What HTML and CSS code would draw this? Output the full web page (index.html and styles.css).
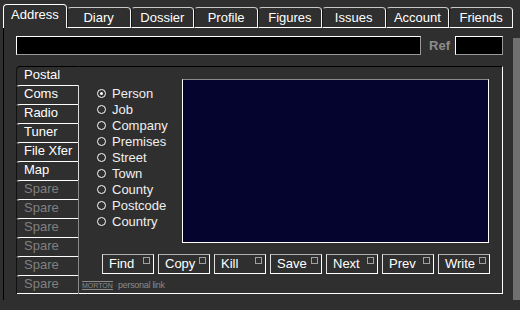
FILE: index.html
```html
<!DOCTYPE html>
<html lang="en">
<head>
  <meta charset="UTF-8" />
  <title>Personal Link</title>
  <link rel="stylesheet" href="styles.css">
</head>
<body>
  <div class="window">
    <div class="tabs">
      <div class="tab active">Address</div>
      <div class="tab">Diary</div>
      <div class="tab">Dossier</div>
      <div class="tab">Profile</div>
      <div class="tab">Figures</div>
      <div class="tab">Issues</div>
      <div class="tab">Account</div>
      <div class="tab">Friends</div>
    </div>
    <div class="frame">
      <div class="ref-row">
        <div class="field long"></div>
        <span class="ref-label">Ref</span>
        <div class="field ref"></div>
      </div>
      <div class="panel">
        <div class="side-tabs">
          <div class="side-tab active">Postal</div>
          <div class="side-tab">Coms</div>
          <div class="side-tab">Radio</div>
          <div class="side-tab">Tuner</div>
          <div class="side-tab">File Xfer</div>
          <div class="side-tab">Map</div>
          <div class="side-tab spare">Spare</div>
          <div class="side-tab spare">Spare</div>
          <div class="side-tab spare">Spare</div>
          <div class="side-tab spare">Spare</div>
          <div class="side-tab spare">Spare</div>
          <div class="side-tab spare">Spare</div>
        </div>
        <div class="content">
          <div class="search">
            <ul class="options">
              <li><span class="radio checked"></span>Person</li>
              <li><span class="radio"></span>Job</li>
              <li><span class="radio"></span>Company</li>
              <li><span class="radio"></span>Premises</li>
              <li><span class="radio"></span>Street</li>
              <li><span class="radio"></span>Town</li>
              <li><span class="radio"></span>County</li>
              <li><span class="radio"></span>Postcode</li>
              <li><span class="radio"></span>Country</li>
            </ul>
            <div class="results"></div>
          </div>
          <div class="actions">
            <button class="btn"><span>Find</span><span class="led"></span></button>
            <button class="btn"><span>Copy</span><span class="led"></span></button>
            <button class="btn"><span>Kill</span><span class="led"></span></button>
            <button class="btn"><span>Save</span><span class="led"></span></button>
            <button class="btn"><span>Next</span><span class="led"></span></button>
            <button class="btn"><span>Prev</span><span class="led"></span></button>
            <button class="btn"><span>Write</span><span class="led"></span></button>
          </div>
          <div class="brand"><span class="logo">MORTON</span> personal link</div>
        </div>
      </div>
    </div>
  </div>
</body>
</html>
```

FILE: styles.css
```css
* {
  box-sizing: border-box;
}
body {
  margin: 0;
  background: #2f2f2f;
  font-family: "Liberation Sans", Arial, sans-serif;
  font-size: 13px;
  color: #fff;
}
.window {
  padding: 3px 0 0 3px;
}
.tabs {
  display: flex;
  align-items: flex-end;
  width: 510px;
  height: 25px;
}
.tab {
  flex: 1;
  height: 21px;
  line-height: 20px;
  text-align: center;
  border-top: 1px solid #c8c8c8;
  border-left: 1px solid #151515;
  border-right: 1px solid #f2f2f2;
  border-bottom: 1px solid #fff;
  border-radius: 4px 4px 0 0;
}
.tab.active {
  height: 24px;
  padding-bottom: 3px;
  border-top-color: #fff;
  border-left-color: #fff;
  border-bottom: none;
}
.frame {
  width: 510px;
  height: 272px;
  padding: 8px 10px 0 12px;
  border-left: 1px solid #000;
  background: #2f2f2f;
  box-shadow: 7px 10px 0 #707070;
}
.ref-row {
  display: flex;
  align-items: center;
  height: 19px;
}
.field {
  height: 19px;
  background: #000;
  border: 1px solid;
  border-color: #fff #999 #999 #fff;
}
.field.long {
  flex: 1;
}
.field.ref {
  width: 48px;
}
.ref-label {
  margin: 0 5px 0 8px;
  font-weight: bold;
  color: #8c8c8c;
}
.panel {
  display: flex;
  margin-top: 11px;
  height: 228px;
}
.side-tabs {
  width: 63px;
  border-bottom: 1px solid #fff;
}
.side-tab {
  height: 19px;
  line-height: 16px;
  padding-left: 7px;
  border-top: 1px solid #fff;
  border-left: 1px solid #111;
  border-right: 1px solid #ddd;
  border-top-left-radius: 4px;
}
.side-tab.active {
  border-top-color: #000;
  border-right-color: transparent;
}
.side-tab.spare {
  color: #808080;
  border-right-color: #8a8a8a;
}
.content {
  flex: 1;
  border-top: 1px solid #000;
  border-right: 1px solid #fff;
  border-bottom: 1px solid #fff;
}
.search {
  display: flex;
  margin-top: 12px;
}
.options {
  list-style: none;
  margin: 0;
  padding: 6px 0 0 18px;
  width: 103px;
}
.options li {
  display: flex;
  align-items: center;
  gap: 6px;
  height: 16px;
  color: #f0f0f0;
}
.radio {
  width: 9px;
  height: 9px;
  border: 1px solid #fff;
  border-radius: 50%;
  display: flex;
  align-items: center;
  justify-content: center;
}
.radio.checked::after {
  content: "";
  width: 3px;
  height: 3px;
  background: #fff;
  border-radius: 50%;
}
.results {
  width: 307px;
  height: 164px;
  background: #04042e;
  border: 1px solid;
  border-color: #8a8a8a #fff #fff #fff;
}
.actions {
  display: flex;
  gap: 4px;
  margin-top: 11px;
  padding-left: 23px;
}
.btn {
  display: flex;
  justify-content: space-between;
  width: 52px;
  height: 20px;
  padding: 0 3px 0 6px;
  background: #2f2f2f;
  color: #fff;
  font-family: inherit;
  font-size: 13px;
  line-height: 18px;
  border: 1px solid;
  border-color: #b0b0b0 #fff #fff #e0e0e0;
}
.led {
  width: 7px;
  height: 7px;
  margin-top: 2px;
  border: 1px solid #a0a0a0;
}
.brand {
  margin-top: 3px;
  padding-left: 3px;
  line-height: 16px;
  font-size: 9px;
  letter-spacing: -0.3px;
  color: #8a8a8a;
}
.logo {
  margin-right: 3px;
  font-size: 7px;
  letter-spacing: 0;
  border-top: 1px solid #8a8a8a;
  border-bottom: 1px solid #8a8a8a;
}
```
